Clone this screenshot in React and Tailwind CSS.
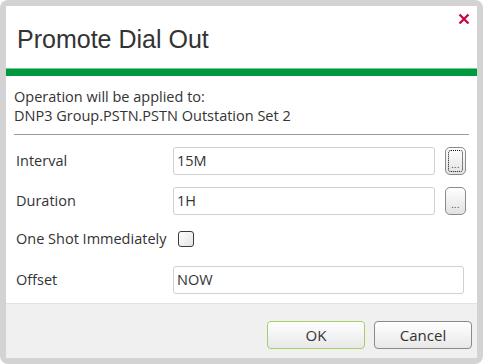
function EllipsisButton({ focused }) {
  return (
    <button className="relative w-[21px] h-[28px] ml-[10px] rounded-[5px] border border-[#8a8a8a] bg-gradient-to-b from-white to-[#e2e2e2] flex items-end justify-center pb-[5px]">
      {focused && (
        <span className="absolute inset-[2px] rounded-[3px] border border-dotted border-[#111]" />
      )}
      <span className="text-[9px] leading-[9px] text-[#333] tracking-[0.5px]">...</span>
    </button>
  );
}

function TextBox({ value, className }) {
  return (
    <div
      className={
        "h-[28px] rounded-[3px] border border-[#d0d0d0] bg-white flex items-center pl-[3px] text-[14.5px] text-[#333] " +
        className
      }
    >
      {value}
    </div>
  );
}

export default function App() {
  return (
    <div className="w-[483px] h-[364px] bg-[#d3d3d3] rounded-[8px] p-[6px] font-['Open_Sans','Noto_Sans',sans-serif]">
      <div className="w-full h-full bg-white flex flex-col">
        {/* Header */}
        <div className="relative h-[62px] pl-[11px] pt-[18px]">
          <h1 className="text-[25px] leading-[30px] text-[#333] font-['Liberation_Sans',Arial,sans-serif]">
            Promote Dial Out
          </h1>
          <svg
            className="absolute right-[7px] top-[7px]"
            width="12"
            height="12"
            viewBox="0 0 12 12"
          >
            <path d="M1.5 1.5 L10.5 10.5 M10.5 1.5 L1.5 10.5" stroke="#c8084a" strokeWidth="2.4" />
          </svg>
        </div>
        <div className="h-[8px] bg-[#009a3e] border-t border-[#7cc79a]" />

        {/* Body */}
        <div className="flex-1 px-[8px] pt-[11px] text-[14.5px] text-[#333]">
          <div className="leading-[19px]">
            <div>Operation will be applied to:</div>
            <div>DNP3 Group.PSTN.PSTN Outstation Set 2</div>
          </div>
          <div className="mt-[9px] border-t border-[#9a9a9a]" />

          <div className="mt-[12px] flex items-center h-[28px]">
            <div className="w-[159px] pl-[2px]">Interval</div>
            <TextBox value="15M" className="w-[262px]" />
            <EllipsisButton focused />
          </div>

          <div className="mt-[12px] flex items-center h-[28px]">
            <div className="w-[159px] pl-[2px]">Duration</div>
            <TextBox value="1H" className="w-[262px]" />
            <EllipsisButton />
          </div>

          <div className="mt-[10px] flex items-center h-[28px]">
            <div className="w-[164px] pl-[2px]">One Shot Immediately</div>
            <div className="w-[16px] h-[16px] rounded-[3px] border border-[#3a3a3a] bg-gradient-to-br from-white to-[#e4e4e4]" />
          </div>

          <div className="mt-[13px] flex items-center h-[28px]">
            <div className="w-[159px] pl-[2px]">Offset</div>
            <TextBox value="NOW" className="w-[291px]" />
          </div>
        </div>

        {/* Footer */}
        <div className="h-[55px] shrink-0 bg-[#f0f0f0] border-t border-[#e2e2e2] flex justify-end items-start pt-[17px] pr-[5px] gap-[9px]">
          <button className="w-[98px] h-[28px] rounded-[4px] border border-[#a5cf63] bg-gradient-to-b from-white to-[#e8e8e8] text-[15px] text-[#333]">
            OK
          </button>
          <button className="w-[98px] h-[28px] rounded-[4px] border border-[#8a8a8a] bg-gradient-to-b from-white to-[#e8e8e8] text-[15px] text-[#333]">
            Cancel
          </button>
        </div>
      </div>
    </div>
  );
}
